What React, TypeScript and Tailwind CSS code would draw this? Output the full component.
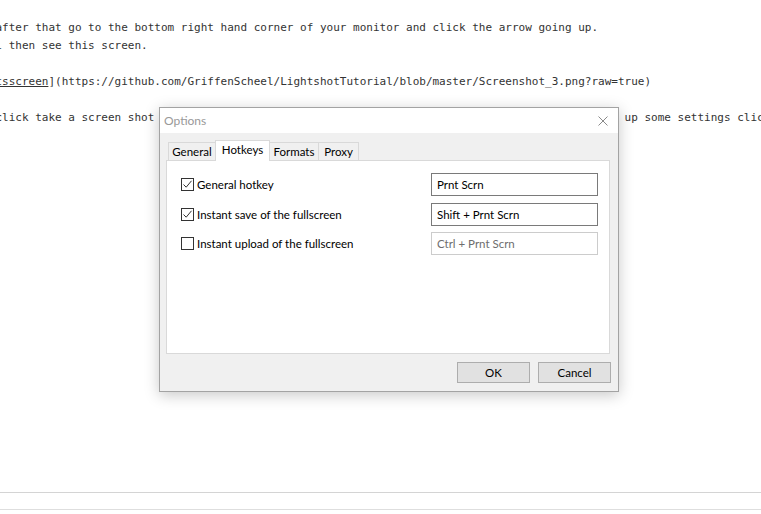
import React from "react";

const ui = { fontFamily: 'Lato, "Noto Sans", sans-serif' };
const mono = { fontFamily: '"DejaVu Sans Mono", "Liberation Mono", monospace' };

function CheckBox({ checked }: { checked?: boolean }) {
  return (
    <span className="flex h-[13px] w-[13px] shrink-0 items-center justify-center border border-[#333333] bg-white">
      {checked && (
        <svg width="11" height="11" viewBox="0 0 11 11" fill="none" aria-hidden>
          <path d="M1.5 5.5 L4.2 8.2 L9.5 1.8" stroke="#333333" strokeWidth="1" />
        </svg>
      )}
    </span>
  );
}

function HotkeyRow({
  label,
  value,
  checked,
  className,
}: {
  label: string;
  value: string;
  checked?: boolean;
  className?: string;
}) {
  return (
    <div className={`flex h-[23px] items-center justify-between ${className ?? ""}`}>
      <label className="flex items-center gap-[3px] text-[11.5px] text-black">
        <CheckBox checked={checked} />
        <span>{label}</span>
      </label>
      <div
        className={`flex h-[23px] w-[167px] items-center border bg-white pl-[5px] text-[11.5px] ${
          checked ? "border-[#7a7a7a] text-black" : "border-[#cccccc] text-[#6d6d6d]"
        }`}
      >
        {value}
      </div>
    </div>
  );
}

function Tab({ label, active, className }: { label: string; active?: boolean; className?: string }) {
  return (
    <div
      className={`flex items-center justify-center border border-b-0 border-[#d9d9d9] text-[11.5px] text-black ${
        active ? "relative z-10 -mb-px h-[21px] bg-white pb-[2px]" : "h-[18px] bg-[#f0f0f0] pt-[1px]"
      } ${className ?? ""}`}
    >
      {label}
    </div>
  );
}

function OptionsDialog() {
  return (
    <div
      className="absolute left-[159px] top-[107px] flex h-[285px] w-[460px] flex-col border border-[#a3a3a3] bg-[#f0f0f0] shadow-[0_3px_14px_rgba(0,0,0,0.22)]"
      style={ui}
    >
      <div className="flex h-[25px] items-center justify-between bg-white pl-[4px] pr-[10px]">
        <span className="text-[12px] text-[#999999]">Options</span>
        <svg width="10" height="10" viewBox="0 0 10 10" aria-hidden>
          <path d="M0.5 0.5 L9.5 9.5 M9.5 0.5 L0.5 9.5" stroke="#8a8a8a" strokeWidth="1" />
        </svg>
      </div>

      <div className="flex flex-col pt-[7px]">
        <div className="ml-[8px] flex h-[20px] items-end">
          <Tab label="General" className="w-[48px]" />
          <Tab label="Hotkeys" active className="-ml-px w-[55px]" />
          <Tab label="Formats" className="-ml-px w-[50px]" />
          <Tab label="Proxy" className="-ml-px w-[41px]" />
        </div>

        <div className="ml-[6px] mr-[8px] h-[194px] border border-[#d9d9d9] bg-white pl-[14px] pr-[11px] pt-[12px]">
          <HotkeyRow label="General hotkey" value="Prnt Scrn" checked />
          <HotkeyRow
            label="Instant save of the fullscreen"
            value="Shift + Prnt Scrn"
            checked
            className="mt-[7px]"
          />
          <HotkeyRow
            label="Instant upload of the fullscreen"
            value="Ctrl + Prnt Scrn"
            className="mt-[6px]"
          />
        </div>

        <div className="mt-[8px] flex justify-end gap-[8px] pr-[7px]">
          <button className="h-[21px] w-[73px] border border-[#adadad] bg-[#e1e1e1] text-[11.5px] text-black">
            OK
          </button>
          <button className="h-[21px] w-[73px] border border-[#adadad] bg-[#e1e1e1] text-[11.5px] text-black">
            Cancel
          </button>
        </div>
      </div>
    </div>
  );
}

export default function App() {
  return (
    <div className="relative h-[514px] w-[761px] overflow-hidden bg-white">
      <div className="h-[492px] overflow-hidden pt-[18.5px]">
        <div className="ml-[-4.6px] whitespace-pre text-[11px] leading-[18px] text-[#333333]" style={mono}>
          <div>after that go to the bottom right hand corner of your monitor and click the arrow going up.</div>
          <div>l then see this screen.</div>
          <div>&nbsp;</div>
          <div>
            <span className="underline">tsscreen</span>](https://github.com/GriffenScheel/LightshotTutorial/blob/master/Screenshot_3.png?raw=true)
          </div>
          <div>&nbsp;</div>
          <div>
            <span>click take a screen shot</span>
            <span>{" ".repeat(71)}</span>
            <span>up some settings click</span>
          </div>
        </div>
      </div>
      <div className="h-[18px] border-y border-t-[#d4d4d4] border-b-[#dedede]" />

      <OptionsDialog />
    </div>
  );
}
